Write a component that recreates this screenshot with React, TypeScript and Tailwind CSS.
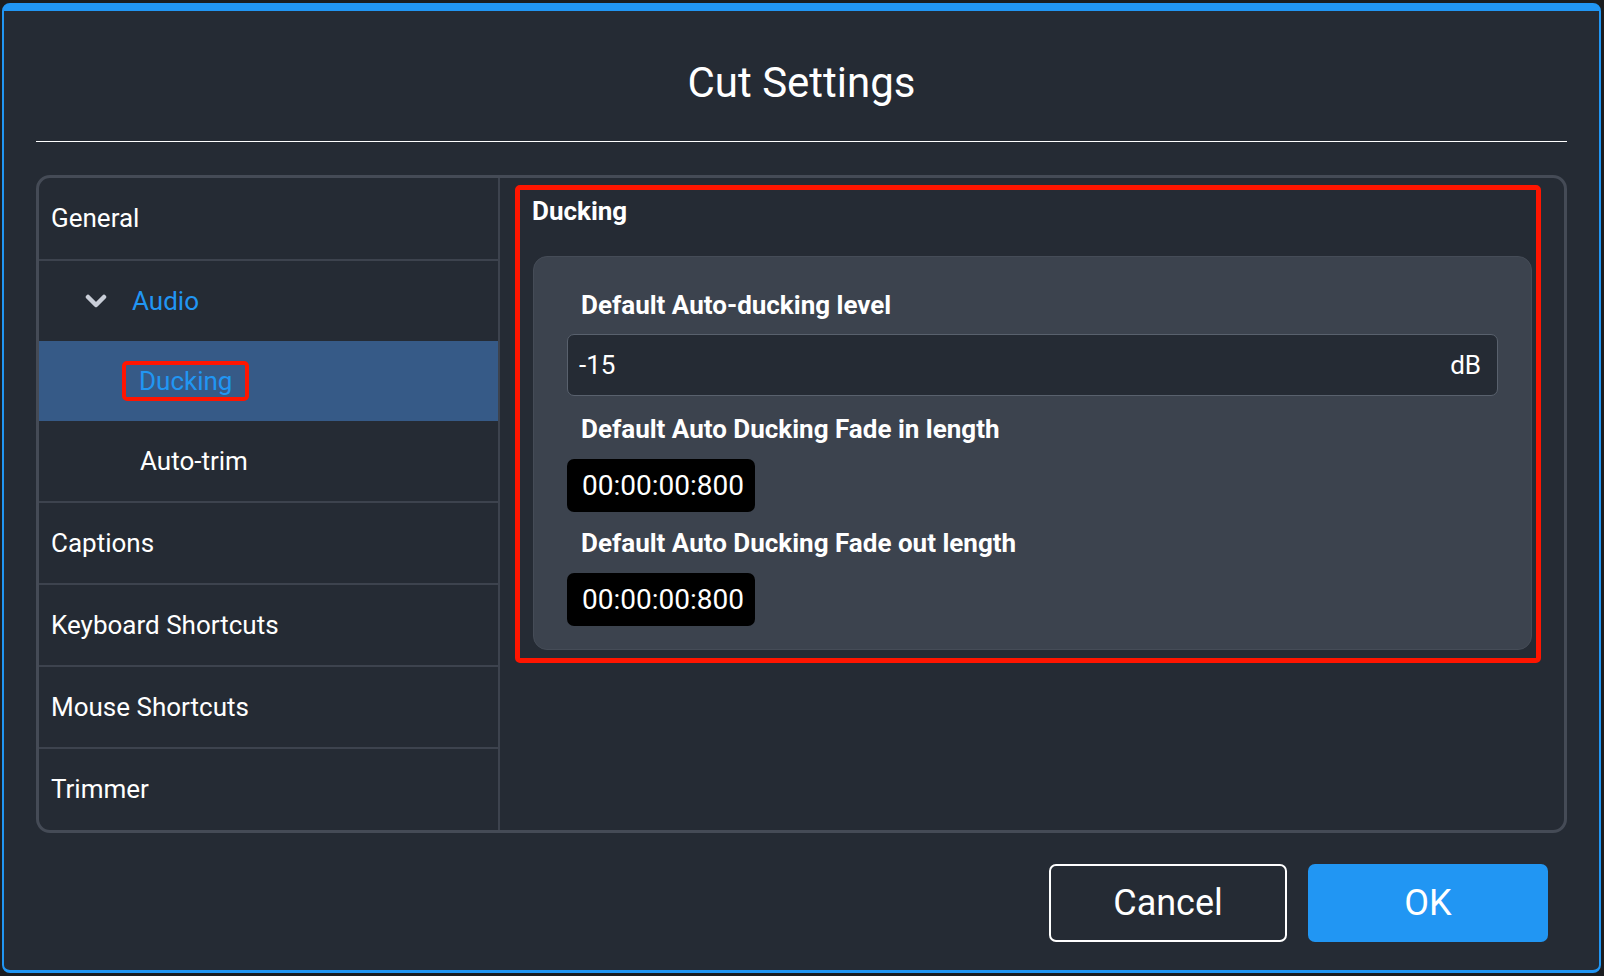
import { useState } from "react";

const font = { fontFamily: "Roboto, 'Noto Sans', sans-serif" };

type NavItem = { label: string; children?: string[] };

const NAV: NavItem[] = [
  { label: "General" },
  { label: "Audio", children: ["Ducking", "Auto-trim"] },
  { label: "Captions" },
  { label: "Keyboard Shortcuts" },
  { label: "Mouse Shortcuts" },
  { label: "Trimmer" },
];

const ChevronDown = () => (
  <svg width="22" height="14" viewBox="0 0 22 14" className="shrink-0">
    <polyline
      points="3,3 11,11 19,3"
      fill="none"
      stroke="#c9ced8"
      strokeWidth="4.5"
      strokeLinecap="round"
      strokeLinejoin="round"
    />
  </svg>
);

const Sidebar = ({ active, onSelect }: { active: string; onSelect: (v: string) => void }) => (
  <div className="w-[461px] shrink-0 border-r-2 border-[#3d434e] flex flex-col">
    {NAV.map((item, i) => {
      const first = i === 0;
      const last = i === NAV.length - 1;
      if (item.children) {
        return (
          <div key={item.label} className="flex flex-col border-b-2 border-[#3d434e]">
            <div className="h-[80px] flex items-center pl-[46px]">
              <ChevronDown />
              <span className="ml-[25px] text-[26px] text-[#2196f3]">{item.label}</span>
            </div>
            {item.children.map((c) =>
              c === active ? (
                <div key={c} className="h-[80px] flex items-center pl-[83px] bg-[#365a87]">
                  <span className="h-[40px] flex items-center px-[13px] border-4 border-[#ff1500] rounded-[5px] text-[26px] text-[#2196f3]">
                    {c}
                  </span>
                </div>
              ) : (
                <button
                  key={c}
                  onClick={() => onSelect(c)}
                  className="h-[80px] flex items-center pl-[101px] text-[26px] text-white text-left"
                >
                  {c}
                </button>
              )
            )}
          </div>
        );
      }
      // rows are border-box, so the 2px divider sits inside the height
      const height = first ? "h-[83px]" : last ? "h-[81px]" : "h-[82px]";
      return (
        <div
          key={item.label}
          className={
            height +
            " flex items-center pl-[12px] text-[26px] text-white" +
            (last ? "" : " border-b-2 border-[#3d434e]")
          }
        >
          {item.label}
        </div>
      );
    })}
  </div>
);

const TimeBox = ({ value }: { value: string }) => (
  <div className="w-[188px] h-[53px] rounded-[7px] bg-black flex items-center pl-[15px] text-[28px] text-white">
    {value}
  </div>
);

const DuckingPanel = () => (
  <div className="flex-1 pl-[15px] pt-[7px] pr-[23px]">
    <div className="border-[5px] border-[#ff1500] rounded-[5px] pl-[13px] pr-[4px] pb-[8px]">
      <div className="h-[32px] mt-[5px] leading-[32px] -ml-[1px] text-[26px] font-bold text-white">
        Ducking
      </div>
      <div className="mt-[29px] rounded-[14px] bg-[#3c434e] border border-[#454c57] px-[33px] pt-[32px] pb-[23px]">
        <div className="h-[32px] leading-[32px] pl-[14px] text-[26px] font-bold text-white">
          Default Auto-ducking level
        </div>
        <div className="mt-[13px] h-[62px] rounded-[7px] border border-[#59616d] bg-[#252b34] flex items-center justify-between pl-[11px] pr-[16px] text-[26px] text-white">
          <span>-15</span>
          <span>dB</span>
        </div>
        <div className="mt-[17px] h-[32px] leading-[32px] pl-[14px] text-[26px] font-bold text-white">
          Default Auto Ducking Fade in length
        </div>
        <div className="mt-[14px]">
          <TimeBox value="00:00:00:800" />
        </div>
        <div className="mt-[15px] h-[32px] leading-[32px] pl-[14px] text-[26px] font-bold text-white">
          Default Auto Ducking Fade out length
        </div>
        <div className="mt-[14px]">
          <TimeBox value="00:00:00:800" />
        </div>
      </div>
    </div>
  </div>
);

export default function App() {
  const [active, setActive] = useState("Ducking");

  return (
    <div style={font} className="w-[1604px] h-[976px] bg-[#1b1d20] pt-[3px] pl-[2px] pr-[3px] pb-[3px] overflow-hidden">
      <div className="h-full flex flex-col bg-[#252b34] border-2 border-t-[8px] border-b-[3px] border-[#2196f3] rounded-[8px] px-[32px]">
        <h1 className="mt-[47px] h-[50px] leading-[50px] text-center text-[42px] text-white">Cut Settings</h1>
        <div className="mt-[33px] h-px bg-white" />

        <div className="mt-[33px] h-[658px] flex rounded-[14px] border-[3px] border-[#454b56]">
          <Sidebar active={active} onSelect={setActive} />
          <DuckingPanel />
        </div>

        <div className="mt-[31px] flex justify-end gap-[21px] pr-[19px]">
          <button className="w-[238px] h-[78px] rounded-[7px] border-2 border-white text-[36px] text-white">
            Cancel
          </button>
          <button className="w-[240px] h-[78px] rounded-[7px] bg-[#2196f3] text-[36px] text-white">
            OK
          </button>
        </div>
      </div>
    </div>
  );
}
